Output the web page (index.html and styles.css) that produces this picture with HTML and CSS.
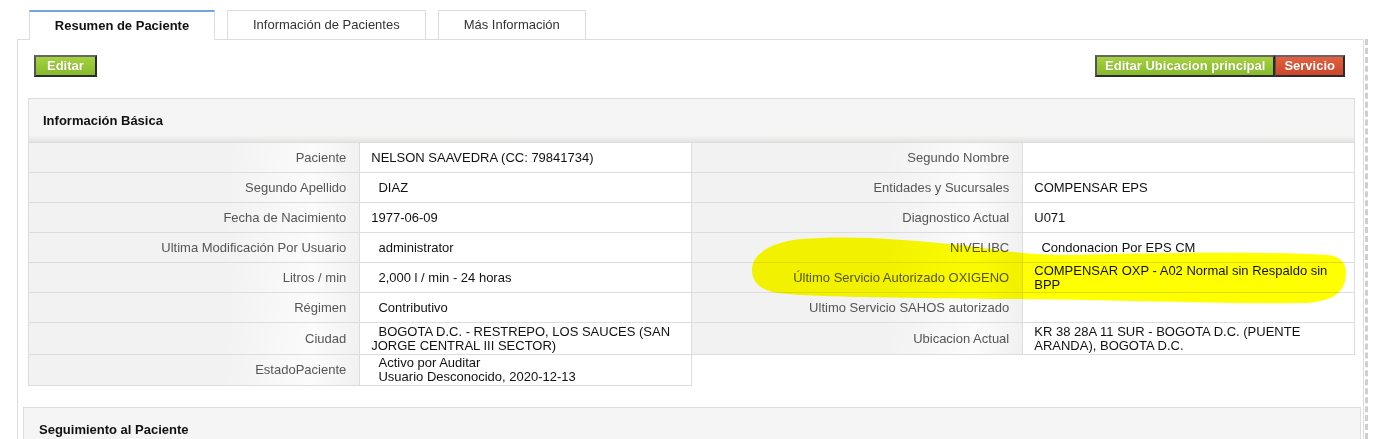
FILE: index.html
```html
<!DOCTYPE html>
<html>
<head>
    <title>Resumen de Paciente</title>
    <link rel="stylesheet" href="styles.css">
</head>
<body>
    <div class="page">
        <div class="tabs">
            <div class="tab active">Resumen de Paciente</div>
            <div class="tab">Información de Pacientes</div>
            <div class="tab">Más Información</div>
        </div>

        <div class="scroll-area">
            <div class="content">
                <div class="actions">
                    <a class="btn green wide">Editar</a>
                    <div class="actions-right">
                        <a class="btn green">Editar Ubicacion principal</a><a class="btn red">Servicio</a>
                    </div>
                </div>

                <div class="info">
                    <div class="box-title">Información Básica</div>
                    <div class="tables">
                        <table class="data">
                            <tr><th>Paciente</th><td>NELSON SAAVEDRA (CC: 79841734)</td></tr>
                            <tr><th>Segundo Apellido</th><td>&nbsp;&nbsp;DIAZ</td></tr>
                            <tr><th>Fecha de Nacimiento</th><td>1977-06-09</td></tr>
                            <tr><th>Ultima Modificación Por Usuario</th><td>&nbsp;&nbsp;administrator</td></tr>
                            <tr><th>Litros / min</th><td>&nbsp;&nbsp;2,000 l / min - 24 horas</td></tr>
                            <tr><th>Régimen</th><td>&nbsp;&nbsp;Contributivo</td></tr>
                            <tr class="tall"><th>Ciudad</th><td>&nbsp;&nbsp;BOGOTA D.C. - RESTREPO, LOS SAUCES (SAN JORGE CENTRAL III SECTOR)</td></tr>
                            <tr class="tall short"><th>EstadoPaciente</th><td>&nbsp;&nbsp;Activo por Auditar<br>&nbsp;&nbsp;Usuario Desconocido, 2020-12-13</td></tr>
                        </table>
                        <table class="data">
                            <tr><th>Segundo Nombre</th><td></td></tr>
                            <tr><th>Entidades y Sucursales</th><td>COMPENSAR EPS</td></tr>
                            <tr><th>Diagnostico Actual</th><td>U071</td></tr>
                            <tr><th>NIVELIBC</th><td>&nbsp;&nbsp;Condonacion Por EPS CM</td></tr>
                            <tr><th>Último Servicio Autorizado OXIGENO</th><td>COMPENSAR OXP - A02 Normal sin Respaldo sin BPP</td></tr>
                            <tr><th>Ultimo Servicio SAHOS autorizado</th><td></td></tr>
                            <tr class="tall"><th>Ubicacion Actual</th><td>KR 38 28A 11 SUR - BOGOTA D.C. (PUENTE ARANDA), BOGOTA D.C.</td></tr>
                        </table>
                    </div>
                </div>

                <div class="follow">
                    <div class="box-title">Seguimiento al Paciente</div>
                </div>
            </div>
        </div>
    </div>

    <svg class="marker" width="1378" height="439" viewBox="0 0 1378 439">
        <path d="M752 270 C752 255 768 243 800 239 C850 235 900 239 960 245 C1000 250 1025 255 1065 255 C1150 253 1250 251 1328 255 C1344 257 1348 266 1345 281 C1342 294 1330 301 1308 303 C1200 304 1100 299 1000 299 C900 298 810 297 777 293 C760 290 752 282 752 270 Z" fill="#ffff00"/>
    </svg>
</body>
</html>
```

FILE: styles.css
```css
body {
    margin: 0;
    font-family: "Liberation Sans", Arial, sans-serif;
    font-size: 13px;
    color: #222;
    background: white;
    overflow: hidden;
}

.page {
    padding: 10px 0 0 17px;
    width: 1351px;
}

.tabs {
    display: flex;
    gap: 12px;
    margin-left: 12px;
    position: relative;
    z-index: 1;
}

.tab {
    height: 28px;
    line-height: 28px;
    padding: 0 25px;
    border: 1px solid #ddd;
    border-bottom: none;
    background: white;
    color: #333;
    margin-bottom: 1px;
}

.tab.active {
    border-top: 2px solid #6fa6e0;
    font-weight: bold;
    color: #111;
    margin-bottom: 0;
    height: 28px;
    line-height: 27px;
    width: 136px;
    padding: 0 24px;
    text-align: center;
}

.scroll-area {
    border-right: 3px dashed #cfcfcf;
    padding-right: 1px;
    height: 400px;
}

.content {
    border: 1px solid #ddd;
    border-bottom: none;
    height: 400px;
    padding: 15px 18px 0 16px;
    box-sizing: border-box;
    margin-top: -1px;
}

.actions {
    display: flex;
    justify-content: space-between;
    align-items: flex-start;
}

.actions-right {
    display: flex;
}

.btn {
    display: inline-block;
    height: 18px;
    line-height: 18px;
    padding: 0 8px;
    color: white;
    font-weight: bold;
    font-size: 13px;
    border: 2px solid #2b2b2b;
    border-top-color: #666;
    border-left-color: #555;
    text-shadow: 0 0 1px rgba(0, 0, 0, 0.2);
}

.btn.wide {
    padding: 0 11px;
}

.btn.green {
    background: linear-gradient(#a6d23e, #86ba2c);
}

.btn.red {
    background: linear-gradient(#e4603f, #cc462a);
    border-left-width: 1px;
}

.box-title {
    font-weight: bold;
    color: #111;
}

.info {
    margin: 21px -10px 0 -6px;
}

.info .box-title {
    height: 43px;
    line-height: 43px;
    padding-left: 14px;
    border: 1px solid #ddd;
    border-bottom: none;
    background: linear-gradient(#f5f5f5 36px, #e4e4e2 43px);
}

.tables {
    display: flex;
    align-items: flex-start;
}

.data {
    width: 50%;
    border-collapse: collapse;
    background: white;
}

.data + .data {
    margin-left: -1px;
    width: calc(50% + 1px);
}

.data th,
.data td {
    border: 1px solid #ddd;
    height: 30px;
    padding: 0 10px 0 11px;
    line-height: 14px;
    font-weight: normal;
    box-sizing: border-box;
}

.data th {
    width: 50%;
    text-align: right;
    color: #555;
    padding-right: 13px;
    background: linear-gradient(100deg, #f2f2f2 60%, #fbfbfb 85%, #f0f0f0);
}

.data td {
    color: #111;
    width: 50%;
}

.data tr.tall td,
.data tr.tall th {
    height: 32px;
    padding-top: 1px;
    padding-bottom: 1px;
}

.data tr.short td,
.data tr.short th {
    height: 31px;
}

.follow {
    margin: 21px -16px 0 -11px;
    height: 60px;
    border: 1px solid #ddd;
    background: #f5f5f5;
}

.follow .box-title {
    padding: 14px 0 0 15px;
}

.marker {
    position: absolute;
    left: 0;
    top: 0;
    pointer-events: none;
    mix-blend-mode: multiply;
}
```
